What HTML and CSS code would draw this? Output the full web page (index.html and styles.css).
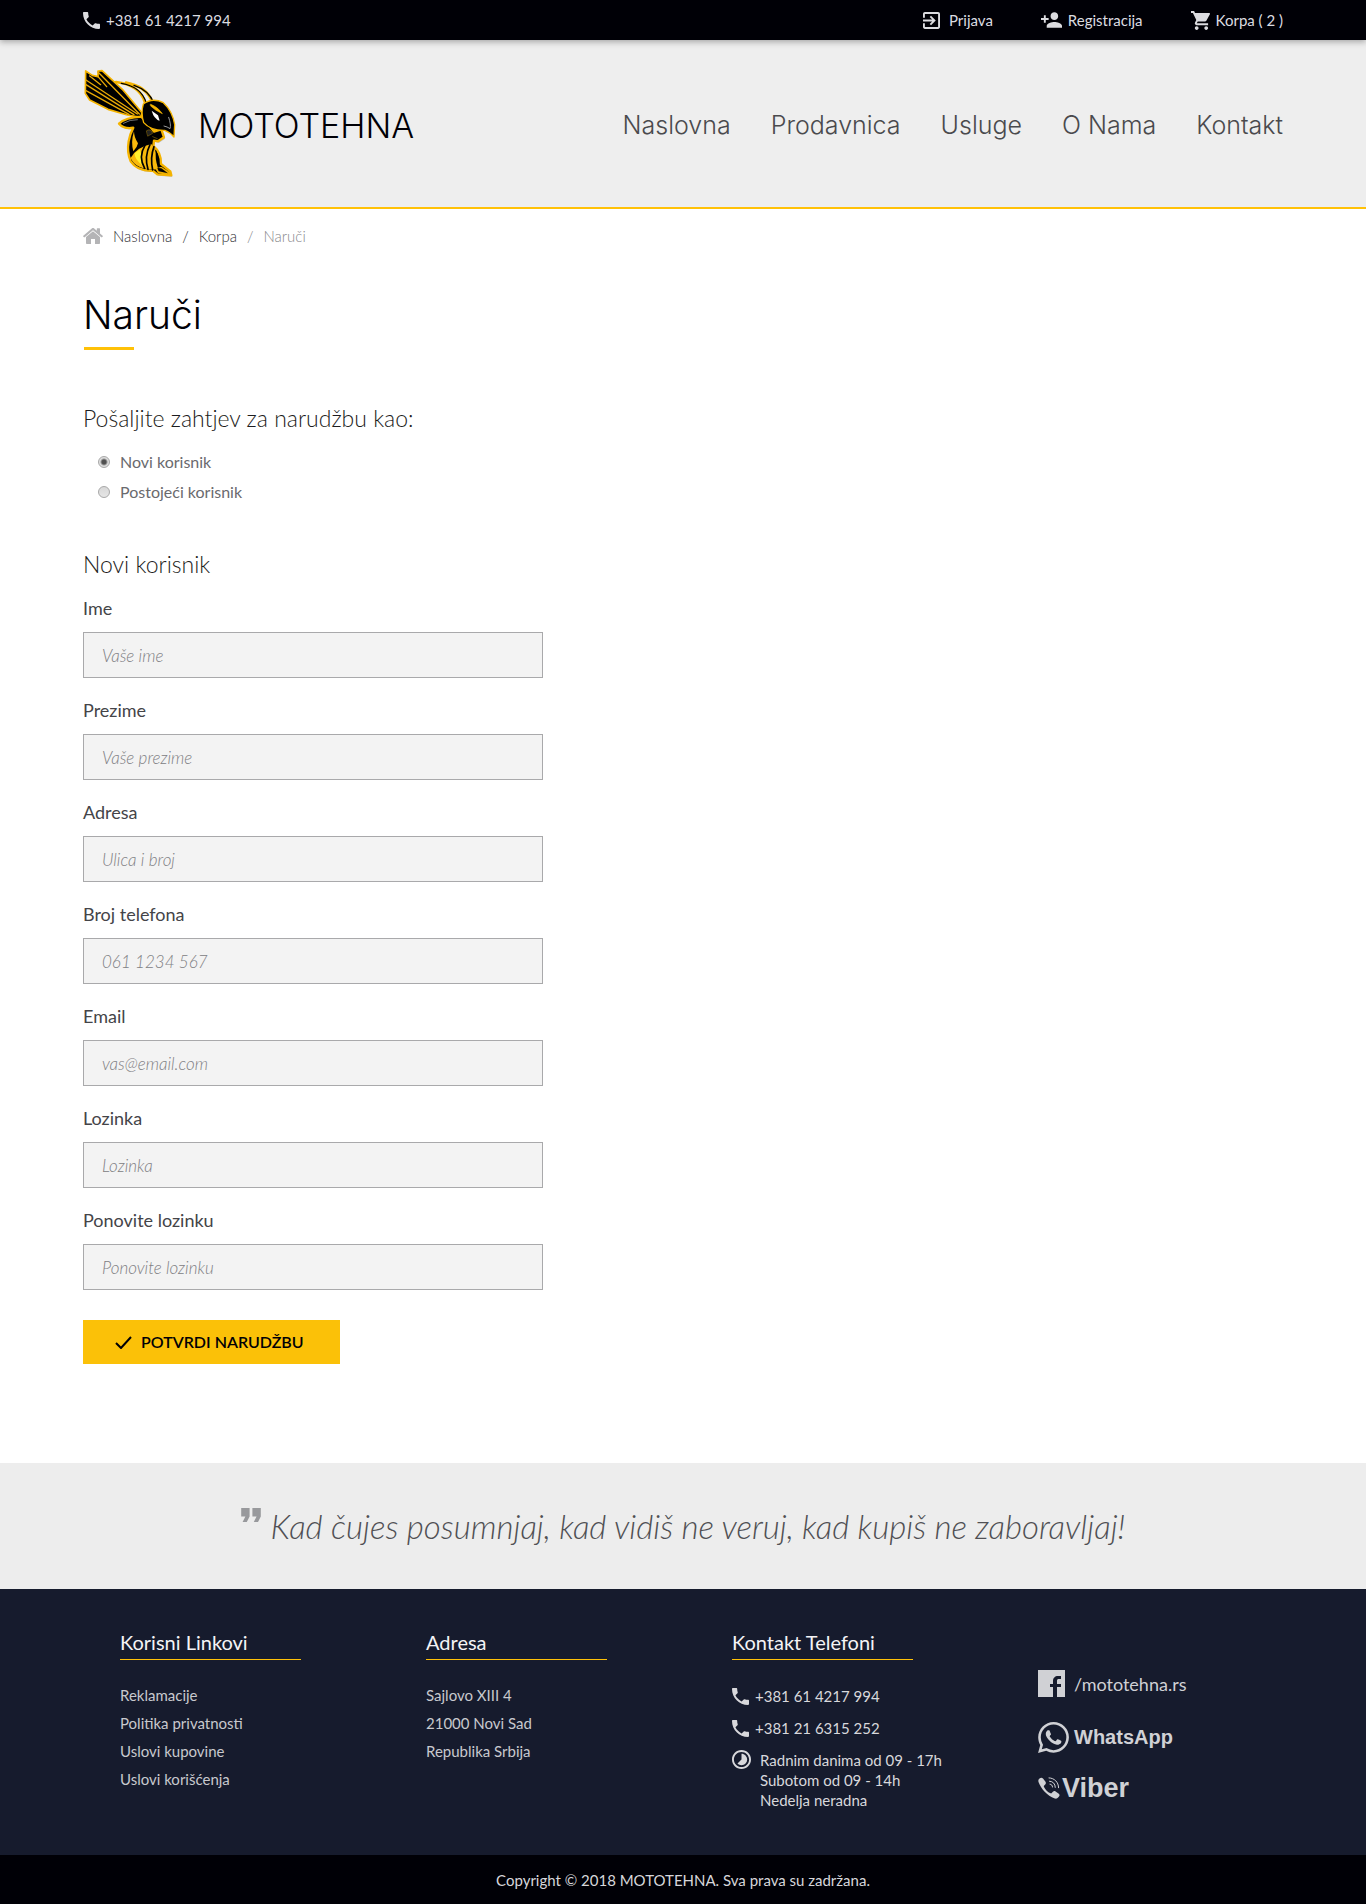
FILE: index.html
```html
<!DOCTYPE html>
<html lang="sr-Latn">
<head>
<meta charset="utf-8">
<meta name="viewport" content="width=device-width, initial-scale=1">
<title>Naruči - MOTOTEHNA</title>
<link rel="stylesheet" href="styles.css">
</head>
<body>
<svg class="sprite" aria-hidden="true">
  <symbol id="i-phone" viewBox="3 3 18 18"><path d="M6.62 10.79c1.44 2.83 3.76 5.14 6.59 6.59l2.2-2.2c.27-.27.67-.36 1.02-.24 1.12.37 2.33.57 3.57.57.55 0 1 .45 1 1V20c0 .55-.45 1-1 1-9.39 0-17-7.61-17-17 0-.55.45-1 1-1h3.5c.55 0 1 .45 1 1 0 1.25.2 2.45.57 3.57.11.35.03.74-.25 1.02l-2.2 2.2z"/></symbol>
</svg>

<div class="topbar">
  <div class="container topbar-row">
    <a class="top-link" href="tel:+381614217994"><svg class="icon-17"><use href="#i-phone"/></svg>+381 61 4217 994</a>
    <div class="top-links">
      <a class="top-link login" href="#"><svg class="icon-17" viewBox="3 3 18 18"><path d="M10.09 15.59L11.5 17l5-5-5-5-1.41 1.41L12.67 11H3v2h9.67l-2.58 2.59zM19 3H5c-1.11 0-2 .9-2 2v4h2V5h14v14H5v-4H3v4c0 1.1.89 2 2 2h14c1.1 0 2-.9 2-2V5c0-1.1-.9-2-2-2z"/></svg>Prijava</a>
      <a class="top-link" href="#"><svg class="icon-person" viewBox="1 4 22 16"><path d="M15 12c2.21 0 4-1.79 4-4s-1.79-4-4-4-4 1.79-4 4 1.79 4 4 4zm-9-2V7H4v3H1v2h3v3h2v-3h3v-2H6zm9 4c-2.67 0-8 1.34-8 4v2h16v-2c0-2.66-5.33-4-8-4z"/></svg>Registracija</a>
      <a class="top-link" href="#"><svg class="icon-19" viewBox="1 2 20 20"><path d="M7 18c-1.1 0-1.99.9-1.99 2S5.9 22 7 22s2-.9 2-2-.9-2-2-2zM1 2v2h2l3.6 7.59-1.35 2.45c-.16.28-.25.61-.25.96 0 1.1.9 2 2 2h12v-2H7.42c-.14 0-.25-.11-.25-.25l.03-.12.9-1.63h7.45c.75 0 1.41-.41 1.75-1.03l3.58-6.49c.08-.14.12-.31.12-.48 0-.55-.45-1-1-1H5.21l-.94-2H1zm16 16c-1.1 0-1.99.9-1.99 2s.89 2 1.99 2 2-.9 2-2-.9-2-2-2z"/></svg>Korpa ( 2 )</a>
    </div>
  </div>
</div>

<header class="header">
  <div class="container header-row">
    <a class="brand" href="#">
      <svg class="logo" viewBox="27 27 285 330" role="img" aria-label="Mototehna">
        <g stroke-linejoin="round" stroke-linecap="round">
          <path d="M35 33L34 100 47 120 102 148 160 165 200 172 204 158 145 88 84 32 72 33 72 50 55 46z" fill="#000" stroke="#f5b400" stroke-width="5"/>
          <g fill="none" stroke="#e8a906" stroke-width="4">
            <path d="M36 60L190 162M36 74L180 164M36 92L165 163M72 36L196 162M47 48L80 74M72 50L98 80"/>
          </g>
          <path d="M126 66C172 72 203 92 213 128M156 68C190 74 222 92 235 126" fill="none" stroke="#f5b400" stroke-width="8"/>
          <path d="M142 70C178 76 208 96 217 130M180 76C204 84 228 100 239 128" fill="none" stroke="#000" stroke-width="4"/>
          <path d="M178 203Q150 208 135 191 155 172 202 170L225 195 240 215 262 208 270 232 252 244 240 242 238 258Q262 278 261 312L289 334 292 346 250 343 236 332Q190 334 170 304 158 276 164 244 168 222 178 203z" fill="#888" opacity=".5" transform="translate(3 4)"/>
          <path d="M178 203Q150 208 135 191 155 172 202 170L225 195 240 215 262 208 270 232 252 244 240 242 238 258Q262 278 261 312L289 334 292 346 250 343 236 332Q190 334 170 304 158 276 164 244 168 222 178 203z" fill="#000" stroke="#f5b400" stroke-width="7"/>
          <path d="M148 190Q168 178 190 179" fill="none" stroke="#777" stroke-width="3"/>
          <path d="M180 214Q170 246 178 274 190 262 192 250 180 232 180 214z" fill="#f9b90c"/>
          <path d="M170 294Q186 262 232 252 252 276 252 328 186 332 170 294z" fill="#f9b90c"/>
          <path d="M182 280Q180 298 208 318L198 268z" fill="#fff02e"/>
          <path d="M213 256Q192 290 212 325M228 254Q210 290 222 328M240 260Q228 292 236 330" fill="none" stroke="#000" stroke-width="5"/>
          <path d="M246 270Q260 296 252 324 242 296 246 270z" fill="#000"/>
          <path d="M244 326L262 320 291 338 288 346 252 340z" fill="#f0b000"/>
          <path d="M250 324L262 325 282 340 254 334z" fill="#000"/>
          <path d="M218 212Q230 204 236 220L222 228zM236 230L250 236" fill="#222" stroke="#80640c" stroke-width="2"/>
          <path d="M208 132Q234 112 268 128 296 154 302 194L300 231Q290 218 272 211 230 212 209 188 200 158 208 132z" fill="#000" stroke="#f5b400" stroke-width="4"/>
          <path d="M230 133Q250 140 265 161 244 152 230 138z" fill="#f5b400" stroke="#f5b400" stroke-width="2"/>
          <path d="M233 152L252 166 257 182Q240 177 233 152z" fill="#fff"/>
          <path d="M284 172Q292 195 288 206 280 200 270 198" fill="none" stroke="#999" stroke-width="3"/>
        </g>
      </svg>
      <span class="brand-name">MOTOTEHNA</span>
    </a>
    <nav class="nav">
      <a href="#">Naslovna</a>
      <a href="#">Prodavnica</a>
      <a href="#">Usluge</a>
      <a href="#">O Nama</a>
      <a href="#">Kontakt</a>
    </nav>
  </div>
</header>

<main class="container main">
  <nav class="crumbs" aria-label="Putanja">
    <svg class="icon-home" viewBox="0 0 20 16"><path d="M10 3.2L3 9v6.2c0 .5.3.8.8.8H8v-5h4v5h4.2c.5 0 .8-.3.8-.8V9z"/><path d="M19.7 7.700L17 5.400V.8c0-.3-.2-.5-.5-.5h-2.200c-.3 0-.5.2-.5.5v2L11.200.5c-.7-.6-1.700-.6-2.400 0L.3 7.700c-.3.2-.3.500-.1.700l.8.900c.2.2.5.2.7 0L10 2.300l8.300 7c.2.2.5.2.7 0l.8-.9c.2-.2.1-.5-.1-.7z"/></svg>
    <a href="#">Naslovna</a><span>/</span><a href="#">Korpa</a><span class="muted">/</span><span class="muted">Naruči</span>
  </nav>

  <h1 class="title">Naruči</h1>

  <form class="order" action="#">
    <fieldset class="choice">
      <legend class="subtitle">Pošaljite zahtjev za narudžbu kao:</legend>
      <label class="option"><input type="radio" name="user" checked>Novi korisnik</label>
      <label class="option"><input type="radio" name="user">Postojeći korisnik</label>
    </fieldset>

    <h2 class="subtitle">Novi korisnik</h2>
    <div class="fields">
      <div class="field"><label for="ime">Ime</label><input id="ime" type="text" placeholder="Vaše ime"></div>
      <div class="field"><label for="prezime">Prezime</label><input id="prezime" type="text" placeholder="Vaše prezime"></div>
      <div class="field"><label for="adresa">Adresa</label><input id="adresa" type="text" placeholder="Ulica i broj"></div>
      <div class="field"><label for="telefon">Broj telefona</label><input id="telefon" type="tel" placeholder="061 1234 567"></div>
      <div class="field"><label for="email">Email</label><input id="email" type="email" placeholder="vas@email.com"></div>
      <div class="field"><label for="lozinka">Lozinka</label><input id="lozinka" type="password" placeholder="Lozinka"></div>
      <div class="field"><label for="lozinka2">Ponovite lozinku</label><input id="lozinka2" type="password" placeholder="Ponovite lozinku"></div>
    </div>
    <button class="submit" type="submit"><svg class="icon-check" viewBox="0 0 17 13"><path d="M1 7l5 5L16 1" fill="none" stroke="#000006" stroke-width="2"/></svg>POTVRDI NARUDŽBU</button>
  </form>
</main>

<section class="quote">
  <svg class="icon-quote" viewBox="5 7 14 10"><path d="M6 17h3l2-4V7H5v6h3zm8 0h3l2-4V7h-6v6h3z"/></svg>
  <p>Kad čujes posumnjaj, kad vidiš ne veruj, kad kupiš ne zaboravljaj!</p>
</section>

<footer class="footer">
  <div class="container footer-grid">
    <section>
      <h3>Korisni Linkovi</h3>
      <ul class="list">
        <li><a href="#">Reklamacije</a></li>
        <li><a href="#">Politika privatnosti</a></li>
        <li><a href="#">Uslovi kupovine</a></li>
        <li><a href="#">Uslovi korišćenja</a></li>
      </ul>
    </section>
    <section>
      <h3>Adresa</h3>
      <ul class="list">
        <li>Sajlovo XIII 4</li>
        <li>21000 Novi Sad</li>
        <li>Republika Srbija</li>
      </ul>
    </section>
    <section>
      <h3>Kontakt Telefoni</h3>
      <div class="phones">
        <a class="phone" href="tel:+381614217994"><svg class="icon-17"><use href="#i-phone"/></svg>+381 61 4217 994</a>
        <a class="phone" href="tel:+381216315252"><svg class="icon-17"><use href="#i-phone"/></svg>+381 21 6315 252</a>
        <div class="hours">
          <svg class="icon-19" viewBox="2 2 20 20"><path d="M16.24 7.76C15.07 6.59 13.54 6 12 6v6l-4.24 4.24c2.34 2.34 6.14 2.34 8.49 0 2.34-2.34 2.34-6.14-.01-8.48zM12 2C6.48 2 2 6.48 2 12s4.48 10 10 10 10-4.48 10-10S17.52 2 12 2zm0 18c-4.42 0-8-3.58-8-8s3.58-8 8-8 8 3.58 8 8-3.58 8-8 8z"/></svg>
          <p>Radnim danima od 09 - 17h<br>Subotom od 09 - 14h<br>Nedelja neradna</p>
        </div>
      </div>
    </section>
    <section class="social">
      <a class="facebook" href="#"><svg class="icon-fb" viewBox="0 0 27 28"><path d="M0 0h27v27h-8V17h4v-3h-4v-3c0-1.500.5-2 2-2h2V6h-3c-3 0-5 2-5 5v3h-3v3h3v10H0z"/></svg>/mototehna.rs</a>
      <a class="whatsapp" href="#"><svg class="icon-wa" viewBox="0 0 24 24"><path d="M17.472 14.382c-.297-.149-1.758-.867-2.030-.967-.273-.099-.471-.148-.67.15-.197.297-.767.966-.94 1.164-.173.199-.347.223-.644.075-.297-.15-1.255-.463-2.390-1.475-.883-.788-1.480-1.761-1.653-2.059-.173-.297-.018-.458.13-.606.134-.133.298-.347.446-.52.149-.174.198-.298.298-.497.099-.198.05-.371-.025-.52-.075-.149-.669-1.612-.916-2.207-.242-.579-.487-.5-.669-.51-.173-.008-.371-.01-.57-.01-.198 0-.52.074-.792.372-.272.297-1.040 1.016-1.040 2.479 0 1.462 1.065 2.875 1.213 3.074.149.198 2.096 3.200 5.077 4.487.709.306 1.262.489 1.694.625.712.227 1.360.195 1.871.118.571-.085 1.758-.719 2.006-1.413.248-.694.248-1.289.173-1.413-.074-.124-.272-.198-.57-.347m-5.421 7.403h-.004a9.870 9.870 0 01-5.031-1.378l-.361-.214-3.741.982.998-3.648-.235-.374a9.860 9.860 0 01-1.510-5.260c.001-5.450 4.436-9.884 9.888-9.884 2.640 0 5.122 1.030 6.988 2.898a9.825 9.825 0 012.893 6.994c-.003 5.450-4.437 9.884-9.885 9.884m8.413-18.297A11.815 11.815 0 0012.050 0C5.495 0 .160 5.335.157 11.892c0 2.096.547 4.142 1.588 5.945L.057 24l6.305-1.654a11.882 11.882 0 005.683 1.448h.005c6.554 0 11.890-5.335 11.893-11.893a11.821 11.821 0 00-3.480-8.413z"/></svg>WhatsApp</a>
      <a class="viber" href="#"><svg class="icon-viber" viewBox="0 0 22 22"><path d="M1.500 1.500C3 .3 4 .5 5 1.600l2.500 3.200c.6 1 .5 1.900-.3 2.700L6 8.700c-.3.400-.2.800 0 1.300 1.500 3 3.500 5 6.500 6.300.5.200.9.200 1.200-.2l1.200-1.300c.8-.9 1.700-1 2.700-.4l3.200 2.300c1 .8 1 1.800.2 2.800-1 1.400-2.500 2.600-4.200 2C9 18.500 3 12 .5 5 .1 3.500.3 2.500 1.500 1.500z"/><path d="M11 .9c5.500.2 9.500 4.200 9.600 9.800M11.500 4.200c3.500.2 5.700 2.500 5.800 6.200M12 7.200c1.600.2 2.400 1.100 2.500 2.800" fill="none" stroke="currentColor" stroke-linecap="round"/></svg>Viber</a>
    </section>
  </div>
</footer>
<div class="copyright">Copyright © 2018 MOTOTEHNA. Sva prava su zadržana.</div>
</body>
</html>
```
FILE: styles.css
```css
* { box-sizing: border-box; }

body {
  margin: 0;
  background: #fff;
  color: #37373b;
  font-family: Lato, "Open Sans", sans-serif;
  font-size: 15px;
  line-height: 20px;
}

a { color: inherit; text-decoration: none; }
h1, h2, h3, p, ul { margin: 0; padding: 0; font-weight: 400; }
ul { list-style: none; }
svg { flex: none; fill: currentColor; }

.sprite { display: none; }
.container { max-width: 1200px; margin: 0 auto; }
.icon-17 { width: 17px; height: 17px; }
.icon-19 { width: 19px; height: 19px; }

/* Top bar */
.topbar {
  position: relative;
  background: #000006;
  color: #dcdce0;
  box-shadow: 0 2px 6px rgba(0, 0, 0, .3);
}
.topbar-row { display: flex; justify-content: space-between; align-items: center; height: 40px; }
.top-links { display: flex; gap: 48px; }
.top-link { display: flex; align-items: center; gap: 6px; }
.login { gap: 9px; }
.icon-person { width: 21px; height: 16px; }

/* Header */
.header { background: #eee; border-bottom: 2px solid #ffc107; }
.header-row { display: flex; justify-content: space-between; align-items: center; height: 167px; }
.brand { display: flex; align-items: center; gap: 20px; color: #000006; }
.logo { width: 95px; height: 110px; }
.brand-name { font: 300 34px/40px Inter, "Liberation Sans", sans-serif; padding-top: 4px; }
.nav { display: flex; gap: 40px; padding-top: 2px; color: #4a4a4d; font: 300 25px/30px Inter, "Liberation Sans", sans-serif; }

/* Page body */
.main { padding: 15px 0 99px; }
.crumbs { display: flex; align-items: center; gap: 10px; height: 24px; color: #303034; font-weight: 300; }
.icon-home { width: 20px; height: 16px; color: #b4b4b6; }
.crumbs .muted { color: #89898c; }

.title {
  width: fit-content;
  margin-top: 42px;
  color: #000006;
  font: 300 39px/50px Inter, "Liberation Sans", sans-serif;
}
.title::after { content: ""; display: block; width: 50px; height: 3px; margin: 7px 0 0 1px; background: #ffc107; }

.order { padding-top: 53px; }
.choice { margin: 0 0 42px; padding: 0; border: 0; }
.subtitle { padding: 0; font-size: 23px; font-weight: 300; line-height: 30px; color: #1c1c20; }
.choice .subtitle { margin-bottom: 14px; }
.option { display: flex; align-items: center; gap: 10px; height: 30px; padding-left: 15px; font-size: 16px; color: #6a6a6e; }
.option input {
  appearance: none;
  width: 12px;
  height: 12px;
  margin: 0;
  border: 1px solid #a8a8a8;
  border-radius: 50%;
  background: linear-gradient(#d8d8d8, #e6e6e6);
}
.option input:checked { background: radial-gradient(circle, #505050 0 2px, #dedede 4px); }

.fields { display: grid; gap: 19px; width: 460px; max-width: 100%; margin-top: 16px; }
.field { display: grid; gap: 11px; }
.field label { font-size: 18px; line-height: 26px; color: #444448; }
.field input {
  width: 100%;
  height: 46px;
  padding: 0 18px;
  border: 1px solid #a9a9ab;
  border-radius: 0;
  background: #f3f3f3;
  font: 300 17px/24px Lato, "Open Sans", sans-serif;
}
.field input::placeholder { color: #808083; font-style: italic; opacity: 1; }

.submit {
  display: flex;
  align-items: center;
  gap: 9px;
  height: 44px;
  margin-top: 30px;
  padding: 0 36px 0 32px;
  border: 0;
  background: #fbc108;
  color: #000006;
  font: 600 16px/20px Lato, "Open Sans", sans-serif;
}
.icon-check { width: 17px; height: 13px; }

/* Quote band */
.quote { display: flex; justify-content: center; gap: 10px; padding: 43px 20px; background: #ededed; color: #505054; }
.quote p { font-size: 33px; font-style: italic; font-weight: 300; line-height: 40px; }
.icon-quote { width: 20px; height: 14px; margin-top: 2px; color: #98999c; }

/* Footer */
.footer { background: #161b2d; color: #c8c9ce; }
.footer-grid {
  display: grid;
  grid-template-columns: repeat(3, minmax(0, 306px)) 1fr;
  padding: 40px 0 45px 37px;
}
.footer h3 { width: 181px; padding-bottom: 4px; border-bottom: 1px solid #ffc107; color: #f4f4f6; font-size: 20px; line-height: 26px; }
.list { margin-top: 21px; line-height: 28px; }
.phones { display: grid; gap: 12px; margin-top: 26px; }
.phone { display: flex; align-items: center; gap: 6px; color: #d8d8dc; }
.hours { display: flex; gap: 9px; color: #d8d8dc; }
.social { display: grid; align-content: start; gap: 24px; padding-top: 41px; color: #d0d1d5; }
.social a { display: flex; align-items: center; }
.facebook { gap: 9px; font-size: 18px; }
.whatsapp { gap: 5px; font: 700 20px/31px "Liberation Sans", sans-serif; }
.viber { gap: 2px; font: 700 27px/22px "Liberation Sans", sans-serif; }
.icon-fb { width: 27px; height: 28px; }
.icon-wa { width: 31px; height: 31px; }
.icon-viber { width: 22px; height: 22px; }

.copyright { padding: 15px 20px; background: #000006; color: #d6d6da; text-align: center; }
```
